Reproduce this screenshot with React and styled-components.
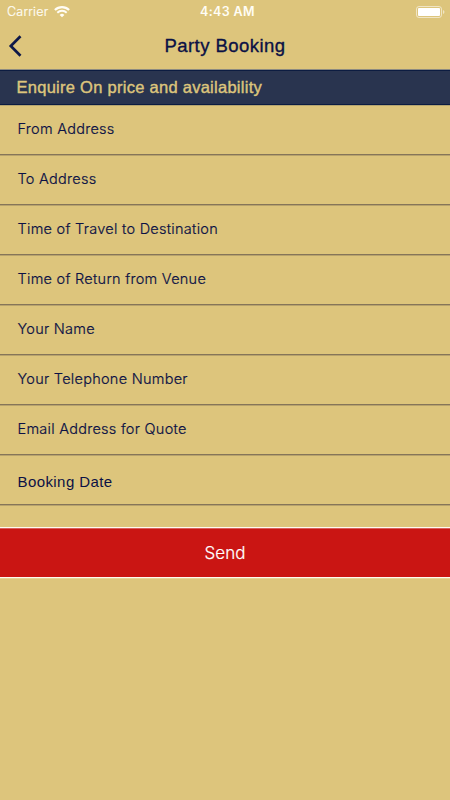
import React from "react";
import styled, { createGlobalStyle } from "styled-components";

const GlobalStyle = createGlobalStyle`
  body {
    margin: 0;
    background-color: #ddc57c;
  }
`;

const Screen = styled.div`
  display: flex;
  flex-direction: column;
  width: 100%;
  height: 800px;
  overflow: hidden;
  background-color: #ddc57c;
  color: #0b1145;
  font-family: Inter, sans-serif;
`;

const StatusBar = styled.div`
  display: grid;
  grid-template-columns: 1fr auto 1fr;
  align-items: center;
  height: 23px;
  padding: 0 5px 0 7px;
  box-sizing: border-box;
  color: #fffdf5;
`;

const CarrierGroup = styled.div`
  display: flex;
  align-items: center;
  gap: 6px;

  svg {
    display: block;
  }
`;

const Carrier = styled.span`
  font-size: 12.5px;
  font-weight: 300;
  line-height: 23px;
  letter-spacing: 0.22px;
  -webkit-text-stroke: 0.2px currentColor;
`;

const Clock = styled.span`
  padding-left: 3px;
  font-size: 12.5px;
  font-weight: 600;
  line-height: 23px;
  letter-spacing: 0.35px;
`;

const BatteryIcon = styled.svg`
  display: block;
  justify-self: end;
`;

const NavBar = styled.header`
  display: grid;
  grid-template-columns: 40px 1fr 40px;
  align-items: center;
  height: 47px;
  box-sizing: border-box;
  border-bottom: 1px solid #8d8b80;
`;

const BackButton = styled.button`
  display: flex;
  align-items: center;
  height: 46px;
  padding: 0 0 0 8px;
  border: none;
  background: transparent;
  color: #0d1848;
  cursor: pointer;
`;

const Title = styled.h1`
  margin: 0;
  font-family: "Liberation Sans", sans-serif;
  font-size: 18.5px;
  font-weight: normal;
  line-height: 46px;
  letter-spacing: 0.45px;
  text-align: center;
  -webkit-text-stroke: 0.35px currentColor;
`;

const SectionHeader = styled.h2`
  height: 35px;
  margin: 0;
  padding-left: 16.5px;
  box-sizing: border-box;
  border-top: 1px solid #0c1c41;
  border-bottom: 1px solid #0c1c41;
  box-shadow: 0 1px 0 #b6a671;
  background-color: #29344f;
  color: #ddc57c;
  font-family: "Liberation Sans", sans-serif;
  font-size: 16.5px;
  font-weight: normal;
  line-height: 33px;
  letter-spacing: 0.27px;
  -webkit-text-stroke: 0.4px currentColor;
`;

const Field = styled.div`
  height: 50px;
  padding-left: 17.5px;
  box-sizing: border-box;
  border-bottom: 1px solid #857559;
  box-shadow: 0 1px 0 #b8a36c;
  font-family: ${(props) =>
    props.$date ? '"Liberation Sans", sans-serif' : "Inter, sans-serif"};
  font-size: ${(props) => (props.$date ? "15px" : "14.5px")};
  font-weight: ${(props) => (props.$date ? 400 : 300)};
  line-height: ${(props) => (props.$date ? "53px" : "47px")};
  letter-spacing: ${(props) => (props.$date ? "0.42px" : "0.27px")};
  -webkit-text-stroke: ${(props) => (props.$date ? "0" : "0.2px currentColor")};
`;

const SendButton = styled.button`
  height: 51px;
  margin-top: 22px;
  padding: 1px 0 0;
  border: none;
  border-top: 1px solid #fffaf0;
  border-bottom: 1px solid #fffaf0;
  box-shadow: 0 1px 0 #e6d396, inset 0 1px 0 #d8605a;
  background-color: #ca1513;
  color: #fff;
  font-family: Inter, sans-serif;
  font-size: 17px;
  font-weight: 300;
  line-height: 48px;
  -webkit-text-stroke: 0.2px currentColor;
  cursor: pointer;
`;

const fields = [
  "From Address",
  "To Address",
  "Time of Travel to Destination",
  "Time of Return from Venue",
  "Your Name",
  "Your Telephone Number",
  "Email Address for Quote",
];

const App = () => {
  return (
    <>
      <GlobalStyle />
      <Screen>
        <StatusBar>
          <CarrierGroup>
            <Carrier>Carrier</Carrier>
            <svg width="16" height="12" viewBox="0 0 16 12" fill="none" stroke="currentColor">
              <path d="M0.9 4a10.2 10.2 0 0 1 14.2 0" strokeWidth="2.2" />
              <path d="M3.3 6.7a6.7 6.7 0 0 1 9.4 0" strokeWidth="1.9" />
              <path d="M5.6 8.9a3.5 3.5 0 0 1 4.8 0L8 11.3z" fill="currentColor" stroke="none" />
            </svg>
          </CarrierGroup>
          <Clock>4:43 AM</Clock>
          <BatteryIcon width="29" height="12" viewBox="0 0 29 12">
            <rect x="0.5" y="0.5" width="25" height="11" rx="2.5" fill="none" stroke="#fff" strokeOpacity="0.55" />
            <rect x="2" y="2" width="22" height="8" rx="1" fill="#fff" />
            <path d="M27 4a2.1 2.1 0 0 1 0 4z" fill="#fff" fillOpacity="0.55" />
          </BatteryIcon>
        </StatusBar>

        <NavBar>
          <BackButton aria-label="Back">
            <svg width="14" height="22" viewBox="0 0 14 22" fill="none" stroke="currentColor" strokeWidth="2.7">
              <path d="M12.5 1.2 2.8 11l9.7 9.8" />
            </svg>
          </BackButton>
          <Title>Party Booking</Title>
        </NavBar>

        <SectionHeader>Enquire On price and availability</SectionHeader>

        {/* Enquiry fields */}
        {fields.map((label) => (
          <Field key={label}>{label}</Field>
        ))}
        <Field $date>Booking Date</Field>

        <SendButton>Send</SendButton>
      </Screen>
    </>
  );
};

export default App;
